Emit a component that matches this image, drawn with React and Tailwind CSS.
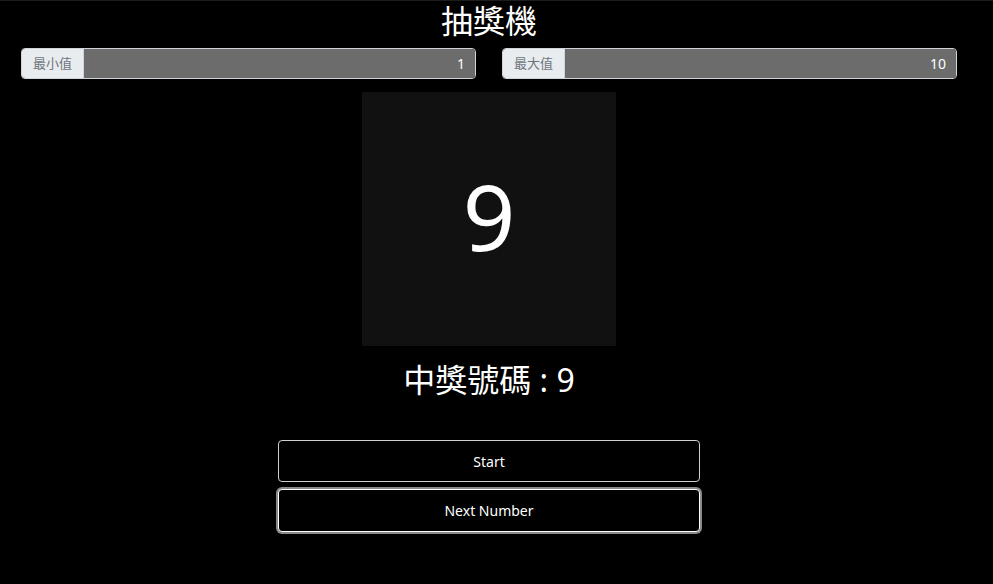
import React, { useState } from "react";

const font = { fontFamily: '"Noto Sans", "Noto Sans CJK TC", sans-serif' };

const NumberInput = ({ label, value, onChange }) => (
  <div className="flex h-[31px] flex-1 rounded border border-[#ced4da] overflow-hidden">
    <span className="flex items-center justify-center shrink-0 whitespace-nowrap bg-[#e9ecef] text-[#6c757d] text-[13px] border-r border-[#ced4da] w-[62px]">
      {label}
    </span>
    <input
      type="text"
      value={value}
      onChange={(e) => onChange(e.target.value)}
      className="flex-1 min-w-0 bg-[#6c6c6c] text-white text-[14px] text-right px-[10px] outline-none"
    />
  </div>
);

export default function App() {
  const [min, setMin] = useState("1");
  const [max, setMax] = useState("10");
  const [current, setCurrent] = useState(9);
  const [winner, setWinner] = useState(9);

  const draw = () => {
    const lo = parseInt(min, 10) || 0;
    const hi = parseInt(max, 10) || 0;
    const n = Math.floor(Math.random() * (hi - lo + 1)) + lo;
    setCurrent(n);
    setWinner(n);
  };

  return (
    <div className="min-h-[584px] bg-black text-white border-t border-[#1c1c1c]" style={font}>
      <div className="flex flex-col items-center pr-[15px]">
        <h1 className="text-[32px] leading-[44px] mt-[-2px]">抽獎機</h1>
        <div className="flex w-full gap-[26px] px-[21px] mt-[5px]">
          <NumberInput label="最小值" value={min} onChange={setMin} />
          <NumberInput label="最大值" value={max} onChange={setMax} />
        </div>
        <div className="mt-[13px] w-[254px] h-[254px] bg-[#111111] flex items-center justify-center">
          <span className="text-[92px] leading-none pb-[6px]">{current}</span>
        </div>
        <div className="mt-[12px] text-[32px] leading-[44px]">中獎號碼 : {winner}</div>
        <div className="mt-[38px] w-[422px] flex flex-col gap-[7px] text-[14px]">
          <button
            onClick={draw}
            className="h-[42px] w-full rounded border border-[#d0d0d0] bg-black text-white"
          >
            Start
          </button>
          <button
            onClick={draw}
            className="h-[43px] w-full rounded border border-white bg-black text-white ring-2 ring-[#8a8a8a]"
          >
            Next Number
          </button>
        </div>
      </div>
    </div>
  );
}
